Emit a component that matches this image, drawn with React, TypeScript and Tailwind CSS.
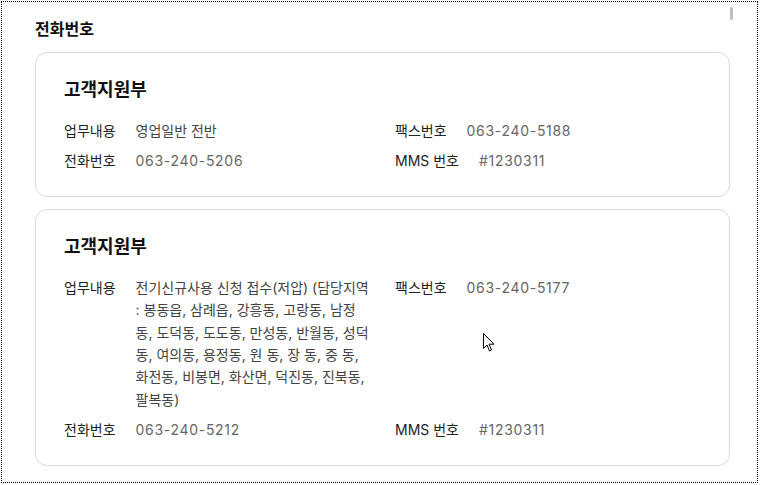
const FONT = '[font-family:Inter,"Noto_Sans_CJK_KR",sans-serif]';

type Row = { label: string; value: string | string[] };

const cards: { title: string; left: Row[]; right: Row[] }[] = [
  {
    title: '고객지원부',
    left: [
      { label: '업무내용', value: '영업일반 전반' },
      { label: '전화번호', value: '063-240-5206' },
    ],
    right: [
      { label: '팩스번호', value: '063-240-5188' },
      { label: 'MMS 번호', value: '#1230311' },
    ],
  },
  {
    title: '고객지원부',
    left: [
      {
        label: '업무내용',
        value: [
          '전기신규사용 신청 접수(저압) (담당지역',
          ': 봉동읍, 삼례읍, 강흥동, 고랑동, 남정',
          '동, 도덕동, 도도동, 만성동, 반월동, 성덕',
          '동, 여의동, 용정동, 원 동, 장 동, 중 동,',
          '화전동, 비봉면, 화산면, 덕진동, 진북동,',
          '팔복동)',
        ],
      },
      { label: '전화번호', value: '063-240-5212' },
    ],
    right: [
      { label: '팩스번호', value: '063-240-5177' },
      { label: 'MMS 번호', value: '#1230311' },
    ],
  },
];

function Field({ row }: { row: Row }) {
  const isNumber = typeof row.value === 'string' && /^[#0-9]/.test(row.value);
  return (
    <div className="flex gap-5 text-[14px] leading-[1.6]">
      <span className="shrink-0 text-[#222]">{row.label}</span>
      <span className={`whitespace-nowrap ${isNumber ? 'text-[#666] tracking-[0.05em]' : 'text-[#444]'}`}>
        {Array.isArray(row.value)
          ? row.value.map((line, i) => (
              <span key={i} className="block">
                {line}
              </span>
            ))
          : row.value}
      </span>
    </div>
  );
}

function Card({ card }: { card: (typeof cards)[number] }) {
  // rows pair up left/right so long text pushes the next row down
  return (
    <section className="w-[695px] rounded-xl border border-[#d9d9de] bg-white px-7 pt-[23px] pb-[23px]">
      <h3 className="text-[18px] leading-[28px] font-bold text-[#111]">{card.title}</h3>
      <div className="mt-[16px] grid grid-cols-2 gap-x-[25px] gap-y-[8px]">
        {card.left.map((row, i) => [
          <Field key={`l${i}`} row={row} />,
          <Field key={`r${i}`} row={card.right[i]} />,
        ])}
      </div>
    </section>
  );
}

export default function App() {
  return (
    <div className={`relative w-[760px] h-[485px] bg-white overflow-hidden ${FONT}`}>
      <div className="ml-px mt-px w-[757px] h-[482px] border border-dotted border-black">
        <div className="pl-[33px] pt-[15px]">
          <h2 className="text-[16px] leading-[24px] font-bold text-[#111]">전화번호</h2>
          <div className="mt-[11px] flex flex-col gap-[12px]">
            {cards.map((c, i) => (
              <Card key={i} card={c} />
            ))}
          </div>
        </div>
      </div>

      {/* scrollbar thumb */}
      <div className="absolute left-[730px] top-[7px] w-[3px] h-[13px] rounded-sm bg-[#bdbdc2]" />

      {/* mouse pointer */}
      <svg className="absolute left-[483px] top-[333px]" width="12" height="19" viewBox="0 0 12 19">
        <path
          d="M0.5 0.5 L0.5 15.5 L4 12 L6.5 18 L8.5 17 L6 11.2 L11 11.2 Z"
          fill="#fff"
          stroke="#000"
          strokeWidth="1"
          strokeLinejoin="miter"
        />
      </svg>
    </div>
  );
}
